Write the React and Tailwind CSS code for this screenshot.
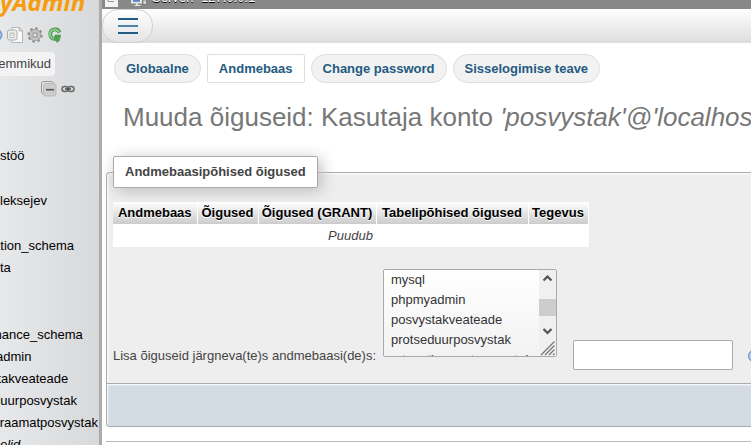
import React from 'react';

const tabs = [
    { label: 'Globaalne' },
    { label: 'Andmebaas', active: true },
    { label: 'Change password' },
    { label: 'Sisselogimise teave' },
];

const columns = [
    { label: 'Andmebaas', width: 'w-[84px]' },
    { label: 'Õigused', width: 'w-[61px]' },
    { label: 'Õigused (GRANT)', width: 'w-[118px]' },
    { label: 'Tabelipõhised õigused', width: 'w-[152px]' },
    { label: 'Tegevus', width: 'w-[60px]' },
];

const databases = ['mysql', 'phpmyadmin', 'posvystakveateade', 'protseduurposvystak', 'retseptiraamatposvystak'];

const PageIcon = () => (
    <svg className="size-4 shrink-0" viewBox="0 0 16 16" fill="none">
        <path d="M5 .5h7.500l3 3v12H5z" fill="#fafafa" stroke="#b5b5b5" />
        <path d="M12 .5V4h3.500" fill="#ddd" stroke="#b5b5b5" />
        <rect x=".5" y="3" width="9.500" height="10" rx="2" fill="#ececec" stroke="#b0b0b0" />
        <path d="M3 6v4.500h4V6z" fill="#fff" stroke="#bbb" />
        <path d="M5 6v3" stroke="#bbb" />
    </svg>
);

const GearIcon = () => (
    <svg className="size-4 shrink-0" viewBox="0 0 16 16" fill="none">
        <circle cx="8" cy="8" r="6.700" stroke="#8f8f8f" strokeWidth="2" strokeDasharray="2.630 2.630" />
        <circle cx="8" cy="8" r="4.400" stroke="#959595" strokeWidth="3.400" />
        <circle cx="8" cy="8" r="4.300" stroke="#c4c4c4" strokeWidth="2" />
        <circle cx="8" cy="8" r="2" fill="#e8e8e8" stroke="#8f8f8f" />
    </svg>
);

const ReloadIcon = () => (
    <svg className="size-4 shrink-0" viewBox="0 0 16 16" fill="none">
        <path d="M12.500 5.500A4.800 4.800 0 1 0 7.500 12" stroke="#3f8f45" strokeWidth="3.600" />
        <path d="M12 5A4.800 4.800 0 1 0 7.500 12" stroke="#8fce8f" strokeWidth="2" />
        <path d="M8 8h5.500v2.500L12 11.500l1 1.500-3 2.500-1-2H7z" fill="#4fa355" stroke="#3f8f45" strokeWidth=".5" />
    </svg>
);

const HelpIcon = () => (
    <svg className="mb-1.5 size-4 shrink-0" viewBox="0 0 16 16" fill="none">
        <circle cx="8" cy="8" r="6.500" fill="#7fa9e6" stroke="#6a93cf" />
        <circle cx="8" cy="8" r="5" stroke="#dbe8fa" />
    </svg>
);

const TreeGroup = ({ className, children }) => (
    <ul className={`-ml-[43px] leading-[22px] whitespace-nowrap ${className}`}>{children}</ul>
);

const Sidebar = () => (
    <aside className="w-[102px] shrink-0 overflow-hidden border-r-3 border-[#aaa] bg-linear-to-r from-[#e6e8ea] to-[#d8d9db] text-black">
        {/* Logo */}
        <div className="flex h-[18px] items-end overflow-hidden pb-1">
            <span className="font-['Open_Sans',sans-serif] text-2xl leading-[25px] font-bold text-[#f89c0e] italic">yAdmin</span>
        </div>

        {/* Toolbar */}
        <div className="mt-2 flex h-[18px] items-center gap-1">
            <svg className="h-4 w-[3px]" viewBox="0 0 3 16">
                <circle cx="-4" cy="8" r="5.500" fill="#e8f0fa" stroke="#7b9fd0" strokeWidth="2" />
            </svg>
            <PageIcon />
            <GearIcon />
            <ReloadIcon />
        </div>
        <button type="button" className="mt-2 -ml-3 flex h-6 w-[67px] items-center justify-end rounded-sm bg-[#f3f3f3] pr-1 text-[#444]">
            Lemmikud
        </button>

        {/* Collapse and link controls */}
        <div className="mt-[5px] ml-[41px] flex h-4 items-center gap-1">
            <svg className="size-4" viewBox="0 0 16 16" fill="none">
                <path d="M2.500 13.500 .5 11V2.500q0-2 2-2H11l2 2" stroke="#999" />
                <rect x="2.500" y="2.500" width="12.500" height="12.500" rx="2" fill="#ccc" stroke="#bbb" />
                <path d="M5 8.700h8" stroke="#555" strokeWidth="1.600" />
            </svg>
            <svg className="h-4 w-[14px]" viewBox="0 0 14 16" fill="none">
                <rect x="1" y="5.500" width="6" height="5" rx="2.500" stroke="#666" strokeWidth="1.500" />
                <rect x="7" y="5.500" width="6" height="5" rx="2.500" stroke="#666" strokeWidth="1.500" />
                <path d="M4 8h6" stroke="#444" strokeWidth="1.500" />
            </svg>
        </div>

        {/* Database tree */}
        <TreeGroup className="mt-12">
            <li className="pl-[43px]">stöö</li>
        </TreeGroup>
        <TreeGroup className="mt-[23px]">
            <li className="pl-[43px]">leksejev</li>
        </TreeGroup>
        <TreeGroup className="mt-[23px]">
            <li>information_schema</li>
            <li className="pl-[43px]">ta</li>
        </TreeGroup>
        <TreeGroup className="mt-[45px]">
            <li>performance_schema</li>
            <li>phpmyadmin</li>
            <li>posvystakveateade</li>
            <li>protseduurposvystak</li>
            <li>retseptiraamatposvystak</li>
            <li className="h-[11px] pl-[43px] italic">elid</li>
        </TreeGroup>
    </aside>
);

const ServerBar = () => (
    <div className="flex h-[9px] items-end overflow-hidden bg-[#888] pl-[3px] text-white">
        <svg className="mb-0.5 h-[7px] w-[13px]" viewBox="0 0 13 7" fill="none">
            <path d="M0 0h13v7H0z" fill="#f2f2f2" />
            <path d="M3 0v1.500h6" stroke="#999" />
        </svg>
        <svg className="mb-[3px] ml-[13px] h-[6px] w-4" viewBox="0 0 16 6" fill="none">
            <path d="M0 0h11v3.500H0z" fill="#e6e6e6" />
            <path d="M2 0h7v1.800H2z" fill="#5b82c4" />
            <path d="M5 3.500h2v1.500h2.500v1h-6V5H5z" fill="#e6e6e6" />
            <path d="M12 0h3.500v4.500H12z" fill="#d5d5d5" stroke="#555" strokeWidth=".5" />
        </svg>
        <span className="mb-1 ml-[5px] leading-[15px] whitespace-pre [text-shadow:0_1px_0_#000]">Server:  127.0.0.1</span>
    </div>
);

const DatabaseSelect = () => (
    <div className="relative mb-[13px] shrink-0">
        <select
            id="databases"
            multiple
            size={4}
            className="block h-[88px] w-[174px] appearance-none overflow-hidden rounded-xs border border-[#aaa] bg-linear-to-b from-white to-[#f2f2f2] pt-0.5 text-[#333] [scrollbar-width:none]"
        >
            {databases.map((name) => (
                <option key={name} className="h-5 min-h-5 px-[7px] py-0 leading-5">
                    {name}
                </option>
            ))}
        </select>
        {/* Scrollbar and resize grip */}
        <svg className="pointer-events-none absolute top-px right-px h-[86px] w-[17px]" viewBox="0 0 17 86" fill="none">
            <path d="M0 0h17v86H0z" fill="#f0f0f0" />
            <path d="M0 29h17v17H0z" fill="#cdcdcd" />
            <path d="m4.500 10.500 4-4 4 4M4.500 59l4 4 4-4" stroke="#505050" strokeWidth="2.200" />
            <path d="M2 85 15.500 71.500M6 85l9.500-9.500M10 85l5.500-5.500M14 85l1.500-1.500" stroke="#777" strokeWidth="1.300" />
        </svg>
    </div>
);

const App = () => (
    <div className="flex min-h-screen overflow-hidden bg-white font-['Liberation_Sans',sans-serif] text-[13px] text-[#444]">
        <Sidebar />
        <main className="min-w-0 flex-1 overflow-hidden">
            <ServerBar />

            <nav className="flex h-[34px] bg-linear-to-b from-white to-[#ddd]">
                <button
                    type="button"
                    aria-label="Menu"
                    className="flex w-[51px] flex-col items-center justify-center gap-[5px] rounded-2xl border border-[#d0d0d0] bg-linear-to-b from-white to-[#e4e4e4]"
                >
                    <span className="h-0.5 w-5 bg-[#235a81]" />
                    <span className="h-0.5 w-5 bg-[#4f83aa]" />
                    <span className="h-0.5 w-5 bg-[#235a81]" />
                </button>
            </nav>

            {/* Tabs */}
            <nav className="mt-[11px] flex gap-1.5 pl-3 font-bold whitespace-nowrap text-[#235a81]">
                {tabs.map((tab) => (
                    <a
                        key={tab.label}
                        href="#privileges"
                        className={`flex h-[29px] items-center border border-[#ddd] px-[11px] ${tab.active ? 'rounded-xs bg-white' : 'rounded-full bg-[#f2f2f2]'}`}
                    >
                        {tab.label}
                    </a>
                ))}
            </nav>

            <h2 className="mt-[18px] pl-[21px] text-[26px] leading-8 whitespace-nowrap text-[#777]">
                Muuda õiguseid: Kasutaja konto <i>'posvystak'@'localhost'</i>
            </h2>

            {/* Database-specific privileges */}
            <form className="mt-[23px] pl-1">
                <fieldset className="min-w-0 rounded-tl-sm border-t border-l border-[#aaa] bg-[#eee] pl-1.5 shadow-[inset_1px_1px_2px_#fff]">
                    <legend className="flex h-8 items-center rounded-xs border border-[#aaa] bg-white px-[11px] font-bold shadow-[3px_3px_15px_#bbb]">
                        Andmebaasipõhised õigused
                    </legend>
                    <table className="mt-[14px] w-[475px] table-fixed bg-white">
                        <thead>
                            <tr className="h-[22px] text-black">
                                {columns.map((column) => (
                                    <th
                                        key={column.label}
                                        className={`border-r border-white bg-linear-to-b from-white to-[#ccc] p-0 text-center font-bold whitespace-nowrap [text-shadow:0_1px_0_#fff] ${column.width}`}
                                    >
                                        {column.label}
                                    </th>
                                ))}
                            </tr>
                        </thead>
                        <tbody>
                            <tr className="h-[23px]">
                                <td colSpan={5} className="p-0 text-center italic">Puudub</td>
                            </tr>
                        </tbody>
                    </table>

                    <div className="mt-[22px] flex items-end overflow-hidden pb-[13px]">
                        <label htmlFor="databases" className="mb-1 w-[270px] shrink-0 leading-5 whitespace-nowrap">
                            Lisa õiguseid järgneva(te)s andmebaasi(de)s:
                        </label>
                        <DatabaseSelect />
                        <input
                            type="text"
                            aria-label="Andmebaas"
                            className="mr-3.5 ml-4 h-[30px] w-40 shrink-0 rounded-xs border border-[#aaa] bg-white px-1.5"
                        />
                        <HelpIcon />
                    </div>
                </fieldset>
                <fieldset className="h-11 rounded-bl-sm border border-r-0 border-[#aaa] bg-[#d3dce3] shadow-[inset_1px_1px_2px_#fff]" />
            </form>

            <hr className="mt-[14px] ml-1 border-[#bbb]" />
        </main>
    </div>
);

export default App;
